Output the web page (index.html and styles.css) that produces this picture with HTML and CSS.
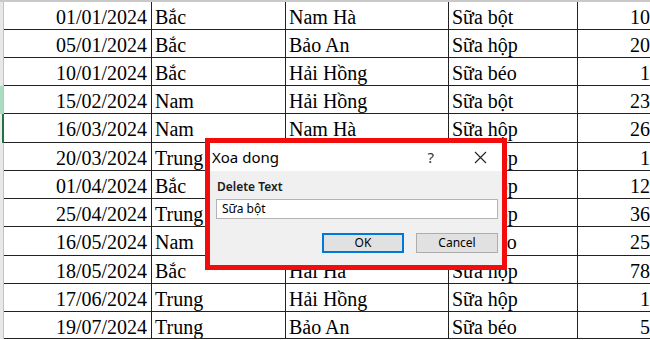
FILE: index.html
```html
<!DOCTYPE html>
<html lang="vi">
<head>
    <meta charset="UTF-8">
    <title>Xoa dong</title>
    <link rel="stylesheet" href="styles.css">
</head>
<body>
    <!-- Sheet -->
    <div class="sheet">
        <div class="hdr"></div><div class="cell num">01/01/2024</div><div class="cell">Bắc</div><div class="cell">Nam Hà</div><div class="cell">Sữa bột</div><div class="cell num">100</div>
        <div class="hdr"></div><div class="cell num">05/01/2024</div><div class="cell">Bắc</div><div class="cell">Bảo An</div><div class="cell">Sữa hộp</div><div class="cell num">200</div>
        <div class="hdr"></div><div class="cell num">10/01/2024</div><div class="cell">Bắc</div><div class="cell">Hải Hồng</div><div class="cell">Sữa béo</div><div class="cell num">15</div>
        <div class="hdr hdr-sel"></div><div class="cell num">15/02/2024</div><div class="cell">Nam</div><div class="cell">Hải Hồng</div><div class="cell">Sữa bột</div><div class="cell num">230</div>
        <div class="hdr hdr-active"></div><div class="cell num">16/03/2024</div><div class="cell">Nam</div><div class="cell">Nam Hà</div><div class="cell">Sữa hộp</div><div class="cell num">260</div>
        <div class="hdr"></div><div class="cell num">20/03/2024</div><div class="cell">Trung</div><div class="cell">Nam Hà</div><div class="cell">Sữa hộp</div><div class="cell num">15</div>
        <div class="hdr"></div><div class="cell num">01/04/2024</div><div class="cell">Bắc</div><div class="cell">Bảo An</div><div class="cell">Sữa hộp</div><div class="cell num">120</div>
        <div class="hdr"></div><div class="cell num">25/04/2024</div><div class="cell">Trung</div><div class="cell">Hải Hồng</div><div class="cell">Sữa hộp</div><div class="cell num">360</div>
        <div class="hdr"></div><div class="cell num">16/05/2024</div><div class="cell">Nam</div><div class="cell">Nam Hà</div><div class="cell">Sữa béo</div><div class="cell num">250</div>
        <div class="hdr"></div><div class="cell num">18/05/2024</div><div class="cell">Bắc</div><div class="cell">Hải Hà</div><div class="cell">Sữa hộp</div><div class="cell num">780</div>
        <div class="hdr"></div><div class="cell num">17/06/2024</div><div class="cell">Trung</div><div class="cell">Hải Hồng</div><div class="cell">Sữa hộp</div><div class="cell num">15</div>
        <div class="hdr"></div><div class="cell num">19/07/2024</div><div class="cell">Trung</div><div class="cell">Bảo An</div><div class="cell">Sữa béo</div><div class="cell num">50</div>
    </div>

    <!-- Dialog (highlighted) -->
    <div class="dialog">
        <div class="dialog-title">
            <span class="title-text">Xoa dong</span>
            <span class="title-help">?</span>
            <svg class="title-close" width="13" height="13" viewBox="0 0 13 13">
                <path d="M1 1 L12 12 M12 1 L1 12" stroke="#222" stroke-width="1.1" fill="none"/>
            </svg>
        </div>
        <div class="dialog-body">
            <div class="field-label">Delete Text</div>
            <div class="field-input">Sữa bột</div>
            <div class="buttons">
                <div class="btn btn-default">OK</div>
                <div class="btn">Cancel</div>
            </div>
        </div>
    </div>
</body>
</html>
```

FILE: styles.css
```css
* {
    margin: 0;
    padding: 0;
    box-sizing: border-box;
}

body {
    width: 650px;
    height: 340px;
    overflow: hidden;
    background: #fff;
    position: relative;
    font-family: "Liberation Serif", "Times New Roman", serif;
    color: #000;
}

/* Sheet grid */
.sheet {
    display: grid;
    grid-template-columns: 4px 148px 134px 163px 129px 87px;
    grid-template-rows: 28px 28px 28px 28px 29px 28px 28px 28px 29px 28px 28px 27px;
    border-top: 2px solid #c9c9c9;
    width: 690px;
}

.cell {
    border-right: 1px solid #222;
    border-bottom: 1px solid #222;
    font-size: 20px;
    line-height: 22px;
    padding: 4px 3px 0 3px;
    white-space: nowrap;
    overflow: hidden;
}

.num {
    text-align: right;
    padding-right: 4px;
}

.hdr {
    background: #e8e8e8;
    border-right: 1px solid #c2c2c2;
}

.hdr-sel {
    background: #a9dcc0;
}

.hdr-active {
    background: #ececec;
    border-right: 2px solid #217346;
}

/* Dialog */
.dialog {
    position: absolute;
    left: 205px;
    top: 138px;
    width: 302px;
    height: 132px;
    border: 5px solid #f20c0c;
    background: #f0f0f0;
    font-family: "Noto Sans", "Open Sans", sans-serif;
    color: #000;
}

.dialog-title {
    display: flex;
    align-items: center;
    height: 28px;
    background: #fff;
    padding-left: 2px;
}

.title-text {
    font-size: 15px;
    line-height: 28px;
    flex: 1;
}

.title-help {
    font-size: 15px;
    color: #333;
    margin-right: 40px;
}

.title-close {
    margin-right: 15px;
}

.dialog-body {
    padding: 8px 4px 0 6px;
}

.field-label {
    font-size: 12px;
    font-weight: 600;
    line-height: 16px;
    padding-left: 1px;
    color: #1a1a1a;
}

.field-input {
    margin-top: 4px;
    height: 20px;
    background: #fff;
    border: 1px solid #b4b4b4;
    font-size: 12px;
    line-height: 18px;
    padding-left: 5px;
}

.buttons {
    display: flex;
    justify-content: flex-end;
    gap: 12px;
    margin-top: 14px;
}

.btn {
    width: 82px;
    height: 20px;
    background: #e1e1e1;
    border: 1px solid #adadad;
    font-size: 12px;
    line-height: 18px;
    text-align: center;
}

.btn-default {
    border: 2px solid #0078d7;
    line-height: 16px;
}
```
